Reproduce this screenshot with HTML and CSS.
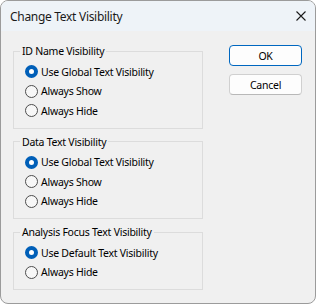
FILE: index.html
```html
<!DOCTYPE html>
<html lang="en">
<head>
    <meta charset="UTF-8">
    <title>Change Text Visibility</title>
    <link rel="stylesheet" href="styles.css">
</head>
<body>

<div class="dialog">
    <div class="titlebar">
        <span class="title">Change Text Visibility</span>
        <svg class="close" width="10" height="10" viewBox="0 0 10 10">
            <path d="M0.5 0.5 L9.5 9.5 M9.5 0.5 L0.5 9.5" stroke="#1b1b1b" stroke-width="1.1" fill="none"/>
        </svg>
    </div>

    <div class="dialog-body">
        <div class="groups">
            <fieldset class="group">
                <legend>ID Name Visibility</legend>
                <label class="option"><span class="radio checked"></span>Use Global Text Visibility</label>
                <label class="option"><span class="radio"></span>Always Show</label>
                <label class="option"><span class="radio"></span>Always Hide</label>
            </fieldset>

            <fieldset class="group">
                <legend>Data Text Visibility</legend>
                <label class="option"><span class="radio checked"></span>Use Global Text Visibility</label>
                <label class="option"><span class="radio"></span>Always Show</label>
                <label class="option"><span class="radio"></span>Always Hide</label>
            </fieldset>

            <fieldset class="group">
                <legend>Analysis Focus Text Visibility</legend>
                <label class="option"><span class="radio checked"></span>Use Default Text Visibility</label>
                <label class="option"><span class="radio"></span>Always Hide</label>
            </fieldset>
        </div>

        <div class="buttons">
            <button class="btn default">OK</button>
            <button class="btn">Cancel</button>
        </div>
    </div>
</div>

</body>
</html>
```

FILE: styles.css
```css
/* Basic reset */
* {
    margin: 0;
    padding: 0;
    box-sizing: border-box;
}

body {
    font-family: "Noto Sans", "Open Sans", sans-serif;
    font-size: 10.5px;
    letter-spacing: -0.25px;
    color: #000;
    background-color: #fff;
}

/* Window frame */
.dialog {
    width: 316px;
    height: 304px;
    border: 1px solid #9b9b9b;
    border-radius: 8px;
    overflow: hidden;
    background-color: #f0f0f0;
    display: flex;
    flex-direction: column;
}

.titlebar {
    height: 30px;
    background-color: #eef3f8;
    display: flex;
    align-items: center;
    justify-content: space-between;
    padding: 0 9px 0 9px;
}

.title {
    font-size: 12px;
    letter-spacing: -0.3px;
    color: #1a1a1a;
}

/* Main content */
.dialog-body {
    display: flex;
    padding: 12px 0 0 12px;
}

.groups {
    display: flex;
    flex-direction: column;
    gap: 5px;
    width: 190px;
}

.group {
    border: 1px solid #dcdcdc;
    padding: 3px 0 7px 0;
    min-inline-size: 0;
}

.group legend {
    margin-left: 6px;
    padding: 0 2px;
    line-height: 16px;
}

.option {
    display: flex;
    align-items: center;
    gap: 3px;
    height: 19.5px;
    margin-left: 11px;
}

/* Radio buttons */
.radio {
    width: 13px;
    height: 13px;
    border-radius: 50%;
    border: 1px solid #4d4d4d;
    background-color: #f7f7f7;
    flex-shrink: 0;
}

.radio.checked {
    border: 4px solid #005fb8;
    background-color: #fff;
}

/* Buttons */
.buttons {
    display: flex;
    flex-direction: column;
    gap: 8px;
    margin-left: 26px;
    padding-top: 2px;
}

.btn {
    width: 73px;
    height: 21px;
    font-family: inherit;
    font-size: 10.5px;
    letter-spacing: -0.25px;
    color: #000;
    background-color: #fdfdfd;
    border: 1px solid #d0d0d0;
    border-bottom-color: #b8b8b8;
    border-radius: 4px;
}

.btn.default {
    border: 1px solid #0067c0;
}
```
